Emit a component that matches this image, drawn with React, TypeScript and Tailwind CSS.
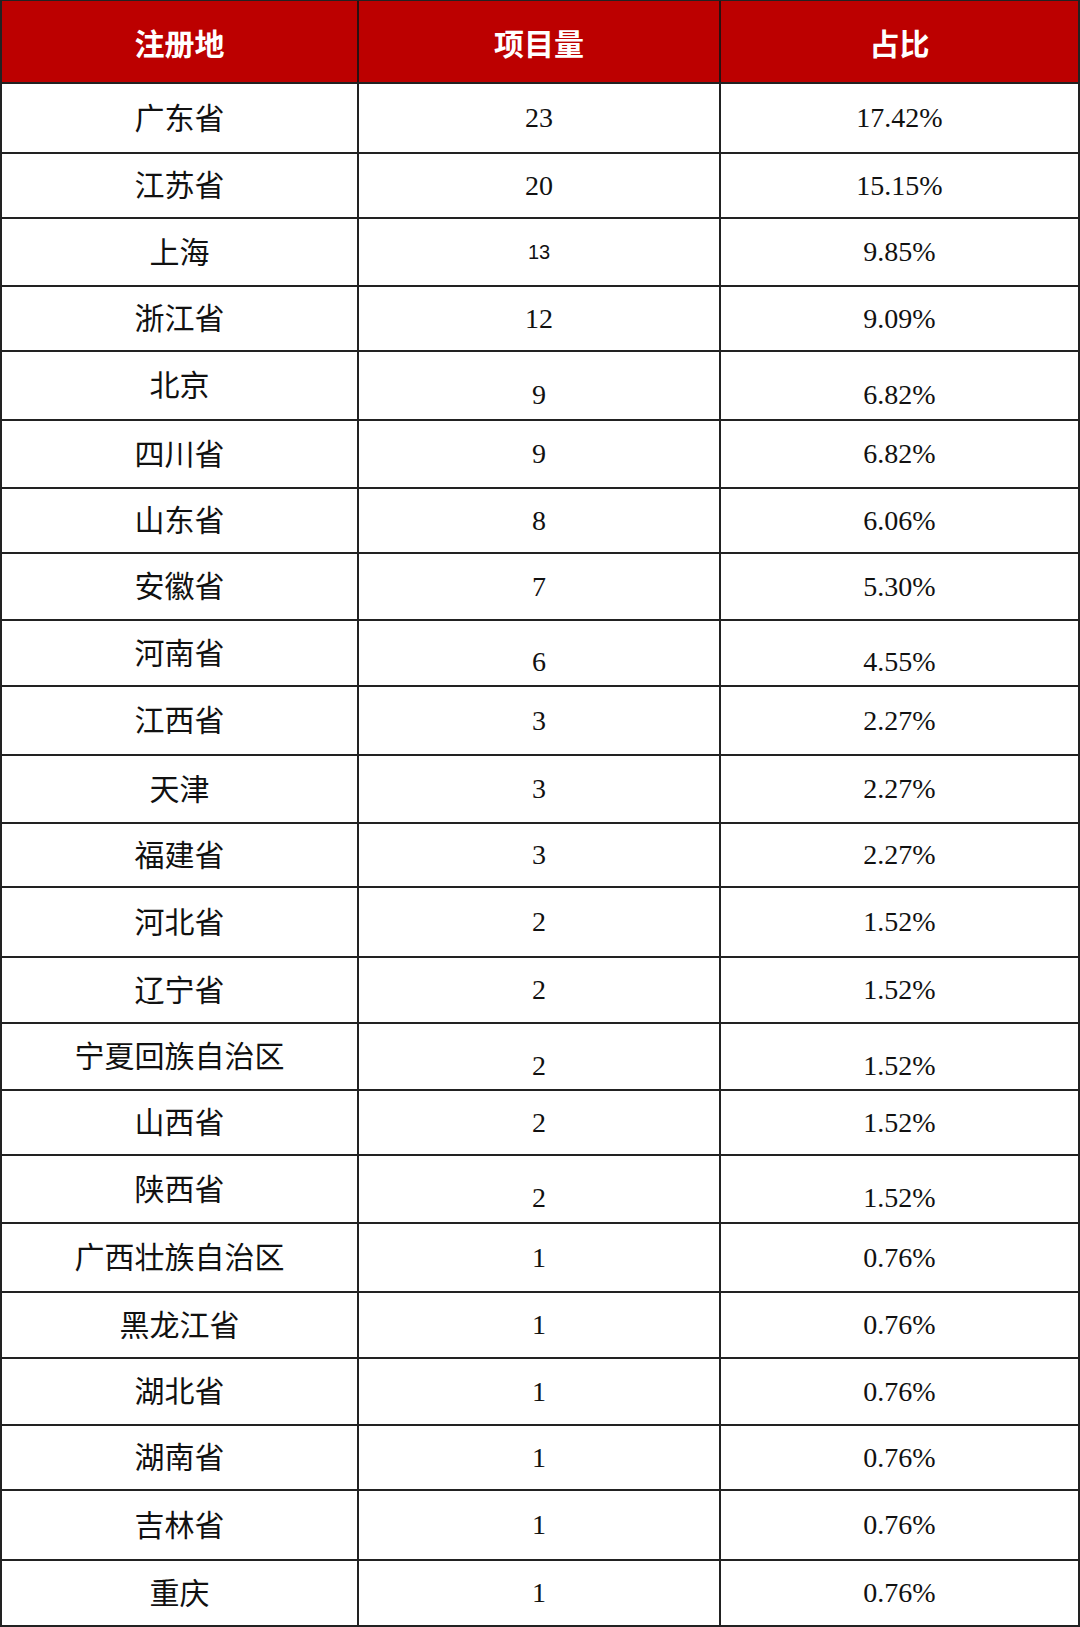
import React from "react";

type Row = {
  name: string;
  count: string;
  pct: string;
  h: string;
  shift?: boolean;
  sans?: boolean;
};

const rows: Row[] = [
  { name: "广东省", count: "23", pct: "17.42%", h: "h-[70px]" },
  { name: "江苏省", count: "20", pct: "15.15%", h: "h-[65px]" },
  { name: "上海", count: "13", pct: "9.85%", h: "h-[68px]", sans: true },
  { name: "浙江省", count: "12", pct: "9.09%", h: "h-[65px]" },
  { name: "北京", count: "9", pct: "6.82%", h: "h-[69px]", shift: true },
  { name: "四川省", count: "9", pct: "6.82%", h: "h-[68px]" },
  { name: "山东省", count: "8", pct: "6.06%", h: "h-[65px]" },
  { name: "安徽省", count: "7", pct: "5.30%", h: "h-[67px]" },
  { name: "河南省", count: "6", pct: "4.55%", h: "h-[66px]", shift: true },
  { name: "江西省", count: "3", pct: "2.27%", h: "h-[69px]" },
  { name: "天津", count: "3", pct: "2.27%", h: "h-[68px]" },
  { name: "福建省", count: "3", pct: "2.27%", h: "h-[64px]" },
  { name: "河北省", count: "2", pct: "1.52%", h: "h-[70px]" },
  { name: "辽宁省", count: "2", pct: "1.52%", h: "h-[66px]" },
  { name: "宁夏回族自治区", count: "2", pct: "1.52%", h: "h-[67px]", shift: true },
  { name: "山西省", count: "2", pct: "1.52%", h: "h-[65px]" },
  { name: "陕西省", count: "2", pct: "1.52%", h: "h-[68px]", shift: true },
  { name: "广西壮族自治区", count: "1", pct: "0.76%", h: "h-[69px]" },
  { name: "黑龙江省", count: "1", pct: "0.76%", h: "h-[66px]" },
  { name: "湖北省", count: "1", pct: "0.76%", h: "h-[67px]" },
  { name: "湖南省", count: "1", pct: "0.76%", h: "h-[65px]" },
  { name: "吉林省", count: "1", pct: "0.76%", h: "h-[70px]" },
  { name: "重庆", count: "1", pct: "0.76%", h: "h-[66px]" },
];

const cjk = "font-['Liberation_Serif','Noto_Sans_CJK_SC',serif]";

export default function App() {
  return (
    <div className="w-[1080px] h-[1627px] bg-white">
      <div className="w-[1080px] border-x-2 border-t border-[#222] text-black">
        <div className="flex h-[83px] bg-[#bc0000] border-b-2 border-[#222] text-white">
          <div className={`w-[357px] border-r-2 border-[#2a1010] flex items-center justify-center pt-[6px] text-[30px] font-semibold ${cjk}`}>
            注册地
          </div>
          <div className={`w-[362px] border-r-2 border-[#2a1010] flex items-center justify-center pt-[6px] text-[30px] font-semibold ${cjk}`}>
            项目量
          </div>
          <div className={`flex-1 flex items-center justify-center pt-[6px] text-[30px] font-semibold ${cjk}`}>
            占比
          </div>
        </div>
        {rows.map((r) => (
          <div key={r.name} className={`flex ${r.h} border-b-2 border-[#222]`}>
            <div className={`w-[357px] border-r-2 border-[#222] flex items-center justify-center text-[30px] text-[#111] ${cjk}`}>
              {r.name}
            </div>
            <div
              className={`w-[362px] border-r-2 border-[#222] flex items-center justify-center text-[#111] ${
                r.shift ? "pt-[18px]" : ""
              } ${
                r.sans
                  ? "text-[20px] font-['Liberation_Sans',sans-serif]"
                  : "text-[28px] font-['Liberation_Serif',serif]"
              }`}
            >
              {r.count}
            </div>
            <div
              className={`flex-1 flex items-center justify-center text-[28px] text-[#111] font-['Liberation_Serif',serif] ${
                r.shift ? "pt-[18px]" : ""
              }`}
            >
              {r.pct}
            </div>
          </div>
        ))}
      </div>
    </div>
  );
}
